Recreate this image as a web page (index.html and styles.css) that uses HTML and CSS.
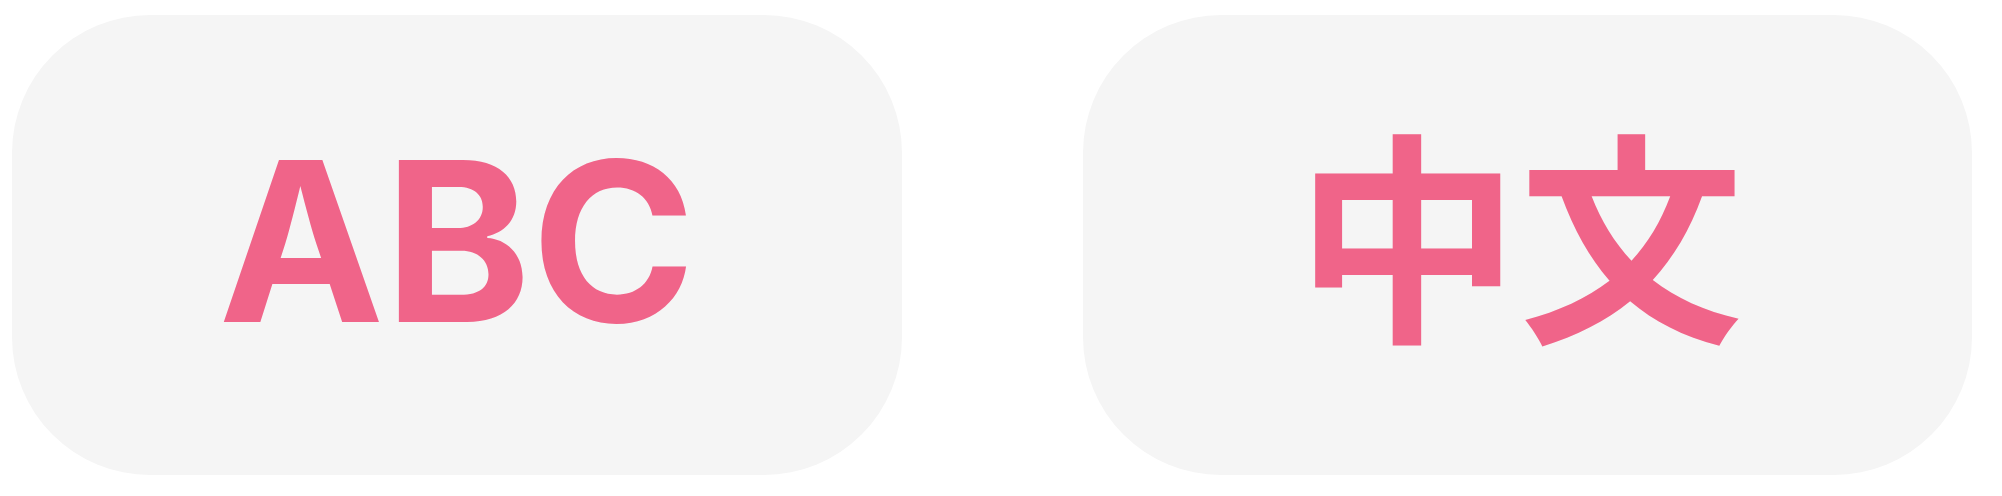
FILE: index.html
```html
<!DOCTYPE html>
<html lang="en">
<head>
<meta charset="utf-8">
<link rel="stylesheet" href="styles.css">
</head>
<body>
<main class="row">
  <div class="card card-left"><span class="label latin">ABC</span></div>
  <div class="card card-right"><span class="label cjk">中文</span></div>
</main>
</body>
</html>
```
FILE: styles.css
```css
html, body {
  margin: 0;
  padding: 0;
  background: #ffffff;
}
.row {
  display: flex;
  gap: 181px;
  padding: 15px 0 0 12px;
}
.card {
  height: 460px;
  background: #f5f5f5;
  border-radius: 138px;
  display: flex;
  align-items: center;
  justify-content: center;
}
.card-left { width: 890px; }
.card-right { width: 889px; }
.label {
  color: #f06489;
  font-weight: 700;
  line-height: 1;
}
.latin {
  font-family: Inter, "Liberation Sans", sans-serif;
  font-size: 222px;
  letter-spacing: 0;
  margin-bottom: 7px;
}
.cjk {
  font-family: "Noto Sans CJK JP", "Noto Sans CJK SC", sans-serif;
  font-size: 224px;
  margin-bottom: 34px;
  margin-right: 16px;
}
```
